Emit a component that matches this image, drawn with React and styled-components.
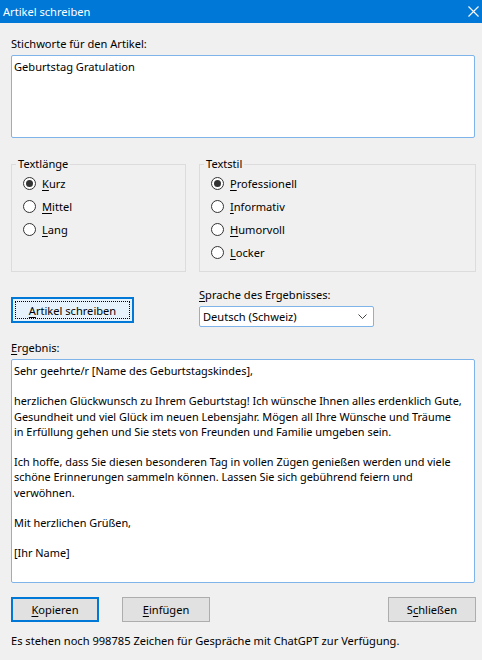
import styled, { createGlobalStyle } from "styled-components";

const GlobalStyle = createGlobalStyle`
  html, body {
    margin: 0;
    padding: 0;
    background: #f0f0f0;
  }
  body {
    font-family: "Noto Sans", "Open Sans", sans-serif;
    font-size: 11.1px;
    color: #000;
  }
`;

const Window = styled.div`
  width: 482px;
  height: 660px;
  background: #f0f0f0;
  display: flex;
  flex-direction: column;
  overflow: hidden;
`;

const TitleBar = styled.div`
  height: 23px;
  flex: none;
  background: #0078d7;
  color: #fff;
  display: flex;
  align-items: center;
  justify-content: space-between;
  padding: 0 3px;
  font-size: 11.1px;
`;

const Body = styled.div`
  display: flex;
  flex-direction: column;
  padding: 13px 7px 0 11px;
`;

const Label = styled.div`
  line-height: 15px;
  height: 15px;
  margin-top: ${(p) => p.$top || 0}px;
`;

const Field = styled.div`
  box-sizing: border-box;
  margin-top: 4px;
  height: ${(p) => p.$height}px;
  background: #fff;
  border: 1px solid #7eb4ea;
  border-radius: 2px;
  padding: 3px 2px;
  line-height: 15.2px;
  font-size: ${(p) => p.$size || 11.1}px;
  white-space: pre;
  overflow: hidden;
`;

const GroupRow = styled.div`
  display: grid;
  grid-template-columns: 175px 277px;
  column-gap: 13px;
  margin-top: 19px;
`;

const Group = styled.fieldset`
  box-sizing: border-box;
  margin: 0;
  padding: 1px 0 0 0;
  min-width: 0;
  height: 115px;
  border: 1px solid #dcdcdc;
`;

const Legend = styled.legend`
  margin-left: 4px;
  padding: 0 2px;
  line-height: 14px;
`;

const RadioRow = styled.div`
  height: 23px;
  display: flex;
  align-items: center;
  gap: 6px;
  padding-left: 11px;
`;

const Radio = styled.span`
  box-sizing: border-box;
  width: 13px;
  height: 13px;
  border-radius: 50%;
  border: 1px solid #333;
  background: #fff;
  display: flex;
  align-items: center;
  justify-content: center;
  flex: none;

  &::after {
    content: "";
    width: 7px;
    height: 7px;
    border-radius: 50%;
    background: ${(p) => (p.$checked ? "#333" : "transparent")};
  }
`;

const Key = styled.span`
  text-decoration: underline;
  text-underline-offset: 2px;
`;

const ActionRow = styled.div`
  display: grid;
  grid-template-columns: 175px 277px;
  column-gap: 13px;
  margin-top: 15px;
`;

const Column = styled.div`
  display: flex;
  flex-direction: column;
  padding-top: ${(p) => p.$top || 0}px;
`;

const Button = styled.button`
  box-sizing: border-box;
  width: ${(p) => p.$width || 88}px;
  height: ${(p) => p.$height || 25}px;
  padding: 2px;
  margin: 0;
  font: inherit;
  color: #000;
  background: ${(p) => (p.$hover ? "#e5f1fb" : "#e1e1e1")};
  border: ${(p) => (p.$default ? "2px solid #0078d7" : "1px solid #adadad")};
  display: flex;
  align-items: stretch;
  justify-content: center;
  flex: none;
`;

const FocusRing = styled.span`
  flex: 1;
  display: flex;
  align-items: center;
  justify-content: center;
  border: 1px dotted ${(p) => (p.$on ? "#000" : "transparent")};
`;

const Combo = styled.div`
  box-sizing: border-box;
  margin-top: 4px;
  width: 175px;
  height: 21px;
  background: #fff;
  border: 1px solid #7eb4ea;
  border-radius: 2px;
  display: flex;
  align-items: center;
  justify-content: space-between;
  padding: 0 6px 0 3px;
`;

const ButtonRow = styled.div`
  display: flex;
  gap: 23px;
  margin-top: 14px;

  & > :last-child {
    margin-left: auto;
    margin-right: -1px;
  }
`;

const Status = styled.div`
  margin-top: 11px;
  line-height: 15px;
`;

const result = `Sehr geehrte/r [Name des Geburtstagskindes],

herzlichen Glückwunsch zu Ihrem Geburtstag! Ich wünsche Ihnen alles erdenklich Gute,
Gesundheit und viel Glück im neuen Lebensjahr. Mögen all Ihre Wünsche und Träume
in Erfüllung gehen und Sie stets von Freunden und Familie umgeben sein.

Ich hoffe, dass Sie diesen besonderen Tag in vollen Zügen genießen werden und viele
schöne Erinnerungen sammeln können. Lassen Sie sich gebührend feiern und
verwöhnen.

Mit herzlichen Grüßen,

[Ihr Name]`;

function Option({ k, rest, checked }) {
  return (
    <RadioRow>
      <Radio $checked={checked} />
      <span>
        <Key>{k}</Key>
        {rest}
      </span>
    </RadioRow>
  );
}

export default function App() {
  return (
    <Window>
      <GlobalStyle />
      <TitleBar>
        <span>Artikel schreiben</span>
        <svg width="11" height="11" viewBox="0 0 11 11">
          <path d="M0.5 0.5 L10.5 10.5 M10.5 0.5 L0.5 10.5" stroke="#fff" strokeWidth="1.1" />
        </svg>
      </TitleBar>
      <Body>
        <Label>Stichworte für den Artikel:</Label>
        <Field $height={83}>Geburtstag Gratulation</Field>

        <GroupRow>
          <Group>
            <Legend>Textlänge</Legend>
            <Option k="K" rest="urz" checked />
            <Option k="M" rest="ittel" />
            <Option k="L" rest="ang" />
          </Group>
          <Group>
            <Legend>Textstil</Legend>
            <Option k="P" rest="rofessionell" checked />
            <Option k="I" rest="nformativ" />
            <Option k="H" rest="umorvoll" />
            <Option k="L" rest="ocker" />
          </Group>
        </GroupRow>

        <ActionRow>
          <Column $top={10}>
            <Button $width={123} $height={26} $default $hover>
              <FocusRing $on>
                <span>
                  <Key>A</Key>rtikel schreiben
                </span>
              </FocusRing>
            </Button>
          </Column>
          <Column>
            <Label>
              <Key>S</Key>prache des Ergebnisses:
            </Label>
            <Combo>
              <span>Deutsch (Schweiz)</span>
              <svg width="9" height="5" viewBox="0 0 9 5">
                <path d="M0.5 0.5 L4.5 4.5 L8.5 0.5" fill="none" stroke="#444" strokeWidth="1" />
              </svg>
            </Combo>
          </Column>
        </ActionRow>

        <Label $top={13}>
          <Key>E</Key>rgebnis:
        </Label>
        <Field $height={224} $size={10.9}>
          {result}
        </Field>

        <ButtonRow>
          <Button $default>
            <FocusRing>
              <span>
                <Key>K</Key>opieren
              </span>
            </FocusRing>
          </Button>
          <Button>
            <FocusRing>
              <span>
                <Key>E</Key>infügen
              </span>
            </FocusRing>
          </Button>
          <Button>
            <FocusRing>
              <span>
                S<Key>c</Key>hließen
              </span>
            </FocusRing>
          </Button>
        </ButtonRow>

        <Status>Es stehen noch 998785 Zeichen für Gespräche mit ChatGPT zur Verfügung.</Status>
      </Body>
    </Window>
  );
}
